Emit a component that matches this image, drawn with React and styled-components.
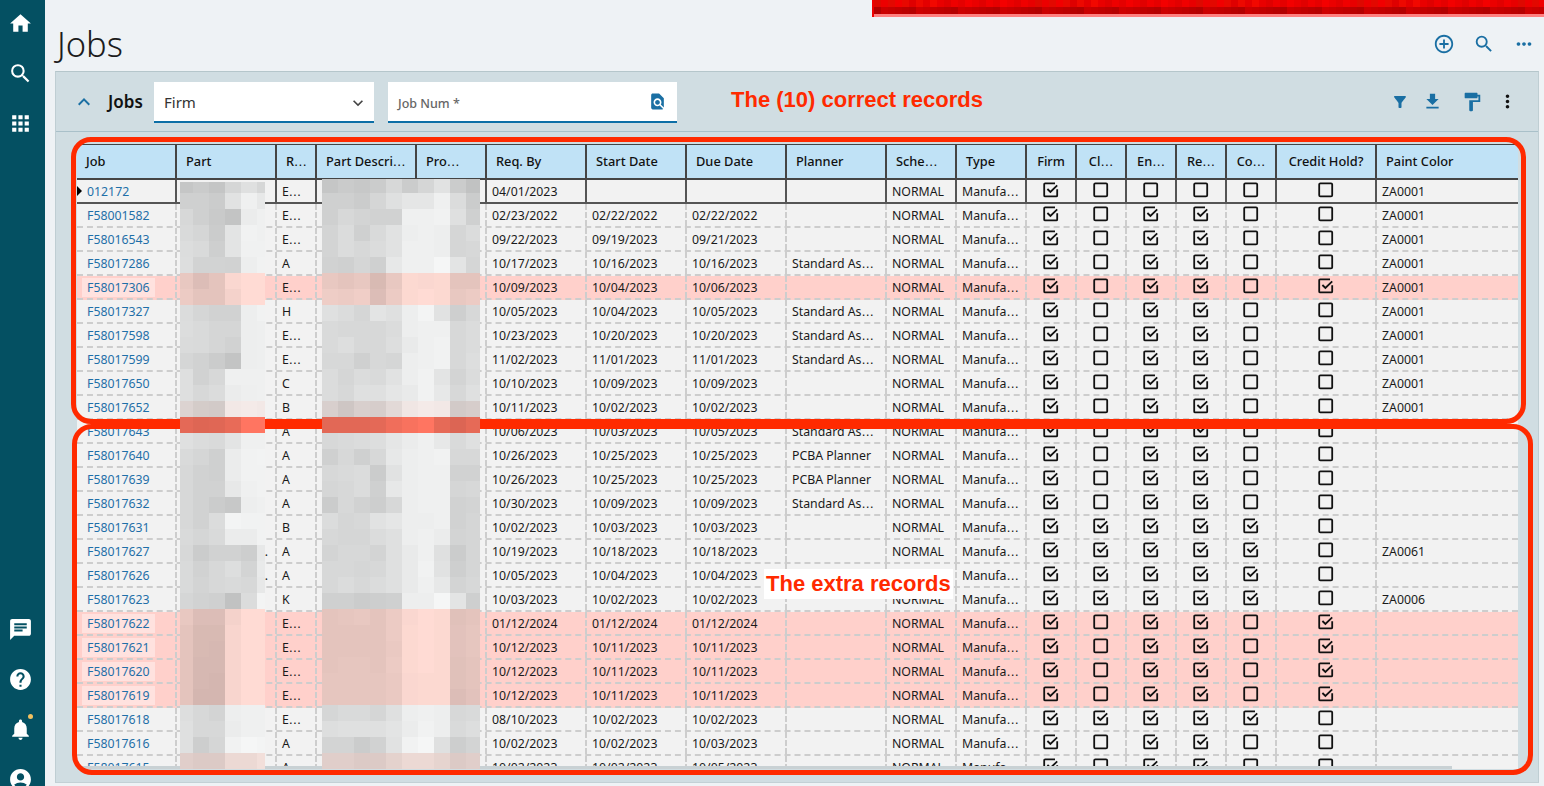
import React from 'react';
import styled, { createGlobalStyle } from 'styled-components';
import {
  MdHome, MdSearch, MdApps, MdChat, MdHelp, MdNotifications, MdAccountCircle,
  MdAddCircleOutline, MdMoreHoriz, MdMoreVert, MdExpandLess, MdExpandMore,
  MdFindInPage, MdFilterAlt, MdFileDownload, MdFormatPaint,
} from 'react-icons/md';

const Global = createGlobalStyle`
  html, body { margin: 0; padding: 0; width: 1544px; height: 786px; overflow: hidden; background: #eef2f5; }
  * { box-sizing: border-box; }
  body { font-family: "Noto Sans", "Open Sans", sans-serif; }
`;

const COLS = '100px 100px 40px 100px 70px 100px 100px 100px 100px 70px 70px 50px 50px 50px 50px 50px 100px 141px';

const Stage = styled.div`position: relative; display: flex; width: 1544px; height: 786px; overflow: hidden;`;
const Sidebar = styled.nav`
  width: 45px; height: 786px; flex: none; background: #045062; color: #fff;
  display: flex; flex-direction: column; justify-content: space-between; padding-right: 5px;
`;
const NavGroup = styled.div`display: flex; flex-direction: column; margin: ${p => p.$bottom ? '0 0 -18px' : '-2px 0 0'};`;
const NavItem = styled.div`
  position: relative; height: 50px; display: flex; align-items: center; justify-content: center; font-size: 25px;
`;
const Dot = styled.span`position: absolute; top: 10px; left: 28px; width: 5px; height: 5px; border-radius: 50%; background: #f2c160;`;
const Main = styled.main`flex: 1; min-width: 0; height: 786px; padding: 0 5px 3px 10px; display: flex; flex-direction: column;`;
const TitleRow = styled.header`height: 71px; flex: none; display: flex; align-items: center; padding: 16px 10px 0 2px; justify-content: space-between;`;
const Title = styled.h1`margin: 0; font-size: 34.5px; line-height: 40px; font-weight: 300; color: #1c1c1c;`;
const ActionRow = styled.div`display: flex; gap: 18px; color: #1a6fa3; font-size: 22px; margin-right: -6px; margin-top: 1px;`;
const Panel = styled.section`flex: 1; min-height: 0; background: #d0dde2; border-top: 1px solid #b5c6cb; border-left: 1px solid #bfced3; border-right: 1px solid #bfced3; border-bottom: 1px solid #c3d0d5; display: flex; flex-direction: column;`;
const Toolbar = styled.div`height: 60px; flex: none; border-bottom: 1px solid #a9c0c9; display: flex; align-items: center; padding: 0 20px 0 20px;`;
const Collapse = styled.span`display: flex; color: #1a6fa3; font-size: 24px; width: 36px; margin-left: -4px;`;
const PanelName = styled.strong`font-size: 17px; font-weight: 600; color: #111; width: 46px;`;
const FieldBox = styled.div`
  width: ${p => p.$w}px; height: 41px; margin: 2px 14px 0 0; background: #fff; border-bottom: 2px solid #0c6ea6;
  display: flex; align-items: center; justify-content: space-between; padding: 0 9px 0 10px;
`;
const FirmValue = styled.span`font-size: 15px; color: #333;`;
const FieldLabel = styled.span`font-size: 12.5px; font-weight: 500; color: #666; margin-top: 3px;`;
const SelectArrow = styled.span`display: flex; font-size: 20px; color: #444; margin: 2px -3px 0 0;`;
const LookupIcon = styled.span`display: flex; font-size: 19px; color: #1a6fa3; margin-right: 1px;`;
const ToolSpacer = styled.div`flex: 1;`;
const ToolIcons = styled.div`display: flex; align-items: center; color: #1a6fa3;`;
const ToolIcon = styled.span`display: flex; font-size: ${p => p.$size || 20}px; margin-left: ${p => p.$gap}px; color: ${p => p.$dark ? '#111' : 'inherit'};`;

const GridWrap = styled.div`flex: 1; min-height: 0; padding: 12px 20px 0 21px;`;
const Grid = styled.div`width: 1441px; height: 625px; overflow: hidden; position: relative; border-top: 1px solid #444;`;
const HeadRow = styled.div`display: grid; grid-template-columns: ${COLS}; height: 35px; background: #c0e2f6; border-bottom: 2px solid #444;`;
const HeadCell = styled.div`
  display: flex; align-items: center; justify-content: ${p => p.$center ? 'center' : 'flex-start'};
  padding: 0 0 2px ${p => p.$center ? 0 : 9}px; font-size: 12.8px; font-weight: 500; color: #111; white-space: nowrap;
  border-right: ${p => p.$last ? 0 : '2px solid #444'};
`;
const Row = styled.div`
  display: grid; grid-template-columns: ${COLS}; height: 24px;
  background: ${p => p.$pink ? '#ffd0cb' : '#f2f2f2'};
  border-bottom: ${p => p.$current ? '2px solid #555' : '2px dashed #cdcdcd'};
`;
const Cell = styled.div`
  display: flex; align-items: center; height: 22px; font-size: 12.3px; color: #1a1a1a; white-space: pre; overflow: hidden;
  justify-content: ${p => p.$center ? 'center' : p.$right ? 'flex-end' : 'flex-start'};
  padding: 0 ${p => p.$right ? 7 : 0}px 0 ${p => p.$right || p.$center ? 0 : 5}px;
  border-right: ${p => p.$last ? 0 : p.$current ? '2px solid #555' : '2px dashed #cdcdcd'};
`;
const JobCell = styled(Cell)`position: relative; padding-left: 5px;`;
const JobLink = styled.a`
  color: #1f6fa8; padding: 1px 5px; line-height: 17px;
  background: ${p => p.$pink ? '#ffe2df' : 'transparent'};
`;
const Dots = styled.span`font-family: "DejaVu Sans", sans-serif;`;
const Marker = styled.span`position: absolute; left: 0; top: 6px; width: 0; height: 0; border-left: 5px solid #000; border-top: 5px solid transparent; border-bottom: 5px solid transparent;`;
const Scroll = styled.div`height: 3px; position: absolute; left: 0; right: 66px; bottom: 0; background: #c9d1d4;`;

const Mosaic = styled.svg`position: absolute; display: block; left: ${p => p.$x}px; top: ${p => p.$y}px;`;
const Banner = styled.svg`position: absolute; left: 872px; top: 0; display: block;`;
const Callout = styled.div`
  position: absolute; left: ${p => p.$x}px; top: ${p => p.$y}px; width: ${p => p.$w}px; height: ${p => p.$h}px;
  border: 5px solid #ff2a00; border-radius: 20px;
`;
const Note = styled.div`
  position: absolute; left: ${p => p.$x}px; top: ${p => p.$y}px; padding: 0 ${p => p.$pad}px; height: 30px; line-height: 30px;
  font-family: "Liberation Sans", Arial, sans-serif; font-weight: 700; font-size: 22px; color: #ff2a00; white-space: nowrap;
  background: ${p => p.$white ? '#fff' : 'transparent'};
`;

const Txt = ({ v }) => {
  if (!v || !v.endsWith('…')) return v || null;
  return <span>{v.slice(0, -1)}<Dots>…</Dots></span>;
};

const HEAD = [
  ['Job'], ['Part'], ['R…'], ['Part Descri…'], ['Pro…'], ['Req. By'], ['Start Date'], ['Due Date'], ['Planner'], ['Sche…'], ['Type'],
  ['Firm', 1], ['Cl…', 1], ['En…', 1], ['Re…', 1], ['Co…', 1], ['Credit Hold?', 1], ['Paint Color'],
];
const S = 'Standard As…', P = 'PCBA Planner';
const DATA = [
  ['012172', 'E…', '04/01/2023', '', '', '', '100000', 'ZA0001'],
  ['F58001582', 'E…', '02/23/2022', '02/22/2022', '02/22/2022', '', '101100', 'ZA0001'],
  ['F58016543', 'E…', '09/22/2023', '09/19/2023', '09/21/2023', '', '101100', 'ZA0001'],
  ['F58017286', 'A', '10/17/2023', '10/16/2023', '10/16/2023', S, '101100', 'ZA0001'],
  ['F58017306', 'E…', '10/09/2023', '10/04/2023', '10/06/2023', '', '101101', 'ZA0001', 1],
  ['F58017327', 'H', '10/05/2023', '10/04/2023', '10/05/2023', S, '101100', 'ZA0001'],
  ['F58017598', 'E…', '10/23/2023', '10/20/2023', '10/20/2023', S, '101100', 'ZA0001'],
  ['F58017599', 'E…', '11/02/2023', '11/01/2023', '11/01/2023', S, '101100', 'ZA0001'],
  ['F58017650', 'C', '10/10/2023', '10/09/2023', '10/09/2023', '', '101100', 'ZA0001'],
  ['F58017652', 'B', '10/11/2023', '10/02/2023', '10/02/2023', '', '101100', 'ZA0001'],
  ['F58017643', 'A', '10/06/2023', '10/03/2023', '10/05/2023', S, '101100', ''],
  ['F58017640', 'A', '10/26/2023', '10/25/2023', '10/25/2023', P, '101100', ''],
  ['F58017639', 'A', '10/26/2023', '10/25/2023', '10/25/2023', P, '101100', ''],
  ['F58017632', 'A', '10/30/2023', '10/09/2023', '10/09/2023', S, '101100', ''],
  ['F58017631', 'B', '10/02/2023', '10/03/2023', '10/03/2023', '', '111110', ''],
  ['F58017627', 'A', '10/19/2023', '10/18/2023', '10/18/2023', '', '111110', 'ZA0061', 0, '.'],
  ['F58017626', 'A', '10/05/2023', '10/04/2023', '10/04/2023', '', '111110', '', 0, '.'],
  ['F58017623', 'K', '10/03/2023', '10/02/2023', '10/02/2023', '', '111110', 'ZA0006'],
  ['F58017622', 'E…', '01/12/2024', '01/12/2024', '01/12/2024', '', '101101', '', 1],
  ['F58017621', 'E…', '10/12/2023', '10/11/2023', '10/11/2023', '', '101101', '', 1],
  ['F58017620', 'E…', '10/12/2023', '10/11/2023', '10/11/2023', '', '101101', '', 1],
  ['F58017619', 'E…', '10/12/2023', '10/11/2023', '10/11/2023', '', '101101', '', 1],
  ['F58017618', 'E…', '08/10/2023', '10/02/2023', '10/02/2023', '', '111110', ''],
  ['F58017616', 'A', '10/02/2023', '10/02/2023', '10/03/2023', '', '101100', ''],
  ['F58017615', 'A', '10/02/2023', '10/02/2023', '10/05/2023', '', '101100', ''],
];

const PART = `c6 cb c5 d6 e0 d7|d0 d0 cc e2 f0 e8|d8 d0 ca c4 ec f0|da d6 cc e4 f2 f0|dd da cf e4 f1 f1|de d3 d3 d2 ee f2|e8 dc e4 fa ff ff|ec e4 e4 f4 ff ff|dc d6 d2 d2 ee f2|dd da d6 d6 ee ef|db da d6 d2 ee ef|d6 d2 cc c4 ee ef|df d2 d8 f0 f0 f0|df d8 dc ec ef f0|dc d4 d2 f2 f4 f2|e4 de e0 e8 ff ff|e0 dc da e4 f0 f0|da d6 d0 ec f2 f3|d8 d2 d0 ec f2 f2|d8 d2 d2 e8 f0 f2|d8 d2 cc c8 ee f0|d8 d2 dc f4 f2 f2|da d6 da ec ec f2|d8 cc d2 d2 ce e8|da d2 d8 de d4 ea|da d4 d8 da d8 e8|d6 d2 d0 c2 dc f4|e8 dc dc f4 ff ff|e4 d8 d8 f8 ff ff|e4 d8 d6 f8 ff ff|e4 d6 d6 f8 ff ff|e4 d6 d4 f8 ff ff|e4 d4 d4 f8 ff ff|de d8 d4 ee f0 f0|e0 d8 d8 ec f0 f0|e0 ce d6 f2 f6 f4|e0 dc dc ec ec f2`;
const DESC = `c6 cb c8 cc d8 cc d6 e2 cc c2|d0 d0 cc d6 e0 e6 e6 f0 dc cc|d0 d8 d4 d2 d2 f0 f0 f2 e0 d0|d4 dc d0 da e2 ee f0 ee d6 dc|d4 dc d8 dc e2 f0 f0 ee d6 d8|d2 d0 d6 d0 e8 f0 f0 f6 e4 d6|e8 e4 e8 d8 e8 fc fa fc e4 e4|ee ec f0 dc ec fc ff fc e8 ec|e0 dc d6 e4 e0 ee f4 e2 cf d8|da d8 d8 d8 dc ee f0 f0 d8 dc|da de d8 d8 de ea f0 f2 d8 dc|d8 d8 d0 d8 d6 ee f0 f2 d8 de|dc d6 dc da e2 ee f2 e4 d4 dc|dc d8 e0 e0 e6 ea f2 e8 d8 e0|d8 ce d8 d6 e2 f0 f4 f2 d2 d6|e2 e2 e2 e4 f0 f8 ff e6 dc e6|d8 da dc de e6 ec f0 e8 da e0|d0 d8 d0 d8 e8 ee f0 f2 d8 d8|d8 da dc cc e2 ee f0 f0 d2 d2|d6 d8 dc d0 e8 ee f0 f0 d6 d8|cc d8 d2 ce d8 ee f0 f0 d2 d4|dc d6 d8 e2 e6 ee ee f0 d2 d6|d8 d6 d6 dc e0 ee f0 ec d4 d6|d4 d8 d8 d4 e0 ea f0 e0 cc d6|d8 d8 d6 d8 e0 ea f2 e2 cf d6|d8 dc d8 dc e0 ea f0 e8 d4 d8|d0 d0 cc ce d0 ee ee f6 e4 cf|e4 e6 e8 e4 ec fa ff fc e0 e4|e4 e4 e4 e4 ec fc ff fc e2 e6|e4 e4 e4 e4 ea fc ff fc e2 e6|e4 e6 e6 e4 ec fc ff fc e0 e4|e6 e6 e6 e6 ea fa fc fc e0 e4|e6 e6 e6 e6 ea fa fc fc dc e2|d6 da da d6 e0 ee f0 ee d8 da|de e0 e0 e0 e4 ec f2 ee da de|d4 d4 cc d2 e2 f2 f6 e0 ce d4|e0 e0 dc dc e4 ec ec e6 dc e0`;

const tintFor = (i) => {
  if (i === 6 || i === 7 || (i >= 27 && i <= 32)) return [1, 0.86, 0.83];
  if (i === 15) return [1, 0.46, 0.38];
  if (i === 14) return [1, 0.96, 0.95];
  if (i === 36) return [1, 0.92, 0.9];
  return [0.995, 1, 1];
};
const YS = [177, ...Array.from({ length: 36 }, (_, i) => 193 + i * 16), 769];

function MosaicBlock({ table, xs, top }) {
  const rows = table.split('|').map(r => r.split(' ').map(v => parseInt(v, 16)));
  const left = xs[0];
  const w = xs[xs.length - 1] - left;
  const h = 769 - top;
  return (
    <Mosaic $x={left} $y={top} width={w} height={h} viewBox={`${left} ${top} ${w} ${h}`} shapeRendering="crispEdges">
      {rows.flatMap((row, i) => {
        const t = tintFor(i);
        const y = Math.max(YS[i], top);
        return row.map((g, j) => (
          <rect key={`${i}-${j}`} x={xs[j]} y={y} width={xs[j + 1] - xs[j]} height={YS[i + 1] - y}
            fill={`rgb(${Math.round(g * t[0])},${Math.round(g * t[1])},${Math.round(g * t[2])})`} />
        ));
      })}
    </Mosaic>
  );
}

function RedBanner() {
  const cells = [];
  for (let i = 0; i < 96; i++) {
    const a = (i * 37) % 23, b = (i * 53) % 29;
    cells.push(<rect key={`a${i}`} x={2 + i * 7} y={0} width={7} height={7} fill={`rgb(${222 + a},${a % 5 === 0 ? 8 : 0},0)`} />);
    cells.push(<rect key={`b${i}`} x={2 + i * 7} y={7} width={7} height={7} fill={`rgb(${178 + b},0,0)`} />);
  }
  return (
    <Banner width="672" height="17" viewBox="0 0 672 17" shapeRendering="crispEdges">
      <rect x="0" y="0" width="2" height="17" fill="#f00000" />
      {cells}
      <rect x="2" y="14" width="670" height="3" fill="#ff8080" />
    </Banner>
  );
}

function Check({ on }) {
  return (
    <svg width="16" height="16" viewBox="0 0 16 16" fill="none" stroke="#111" strokeWidth="1.8" style={{ marginTop: -3 }}>
      {on ? (
        <>
          <path d="M14.2 7.2V13.4a1 1 0 0 1-1 1H2.2a1 1 0 0 1-1-1V2.4a1 1 0 0 1 1-1H12" />
          <path d="M4.4 7 L7.4 10 L14.2 3.4" />
        </>
      ) : (
        <rect x="1.2" y="1.4" width="13" height="13" rx="1.2" />
      )}
    </svg>
  );
}

const PART_X = [180, 193, 209, 225, 241, 257, 265];
const DESC_X = [322, 338, 354, 370, 386, 402, 418, 434, 450, 466, 480];

export default function App() {
  return (
    <Stage>
      <Global />
      <Sidebar>
        <NavGroup>
          <NavItem><MdHome /></NavItem>
          <NavItem><MdSearch /></NavItem>
          <NavItem><MdApps /></NavItem>
        </NavGroup>
        <NavGroup $bottom>
          <NavItem><MdChat /></NavItem>
          <NavItem><MdHelp /></NavItem>
          <NavItem><MdNotifications /><Dot /></NavItem>
          <NavItem><MdAccountCircle /></NavItem>
        </NavGroup>
      </Sidebar>
      <Main>
        <TitleRow>
          <Title>Jobs</Title>
          <ActionRow>
            <MdAddCircleOutline />
            <MdSearch />
            <MdMoreHoriz />
          </ActionRow>
        </TitleRow>
        <Panel>
          <Toolbar>
            <Collapse><MdExpandLess /></Collapse>
            <PanelName>Jobs</PanelName>
            <FieldBox $w={220}>
              <FirmValue>Firm</FirmValue>
              <SelectArrow><MdExpandMore /></SelectArrow>
            </FieldBox>
            <FieldBox $w={289}>
              <FieldLabel>Job Num *</FieldLabel>
              <LookupIcon><MdFindInPage /></LookupIcon>
            </FieldBox>
            <ToolSpacer />
            <ToolIcons>
              <ToolIcon $size={18}><MdFilterAlt /></ToolIcon>
              <ToolIcon $size={21} $gap={13}><MdFileDownload /></ToolIcon>
              <ToolIcon $size={22} $gap={18}><MdFormatPaint /></ToolIcon>
              <ToolIcon $size={21} $gap={14} $dark><MdMoreVert /></ToolIcon>
            </ToolIcons>
          </Toolbar>
          <GridWrap>
            <Grid>
              <HeadRow>
                {HEAD.map(([t, c], i) => <HeadCell key={t} $center={c} $last={i === HEAD.length - 1}><Txt v={t} /></HeadCell>)}
              </HeadRow>
              {DATA.map((r, i) => {
                const [job, rev, req, start, due, planner, checks, paint, pink, dot] = r;
                const cur = i === 0;
                return (
                  <Row key={job} $pink={pink} $current={cur}>
                    <JobCell $current={cur}>
                      {cur && <Marker />}
                      <JobLink $pink={pink}>{job}</JobLink>
                    </JobCell>
                    <Cell $current={cur} $right>{dot}</Cell>
                    <Cell $current={cur}><Txt v={rev} /></Cell>
                    <Cell $current={cur} />
                    <Cell $current={cur} />
                    <Cell $current={cur}>{req}</Cell>
                    <Cell $current={cur}>{start}</Cell>
                    <Cell $current={cur}>{due}</Cell>
                    <Cell $current={cur}><Txt v={planner} /></Cell>
                    <Cell $current={cur}>NORMAL</Cell>
                    <Cell $current={cur}><Txt v="Manufa…" /></Cell>
                    {checks.split('').map((c, k) => (
                      <Cell key={k} $center $current={cur}><Check on={c === '1'} /></Cell>
                    ))}
                    <Cell $last>{paint}</Cell>
                  </Row>
                );
              })}
              <Scroll />
            </Grid>
          </GridWrap>
        </Panel>
      </Main>
      <RedBanner />
      <Callout $x={71} $y={137} $w={1455} $h={287} />
      <Callout $x={72} $y={424} $w={1461} $h={351} />
      <MosaicBlock table={PART} xs={PART_X} top={182} />
      <MosaicBlock table={DESC} xs={DESC_X} top={179} />
      <Note $x={731} $y={85} $pad={0}>The (10) correct records</Note>
      <Note $x={764} $y={569} $pad={2} $white>The extra records</Note>
    </Stage>
  );
}
